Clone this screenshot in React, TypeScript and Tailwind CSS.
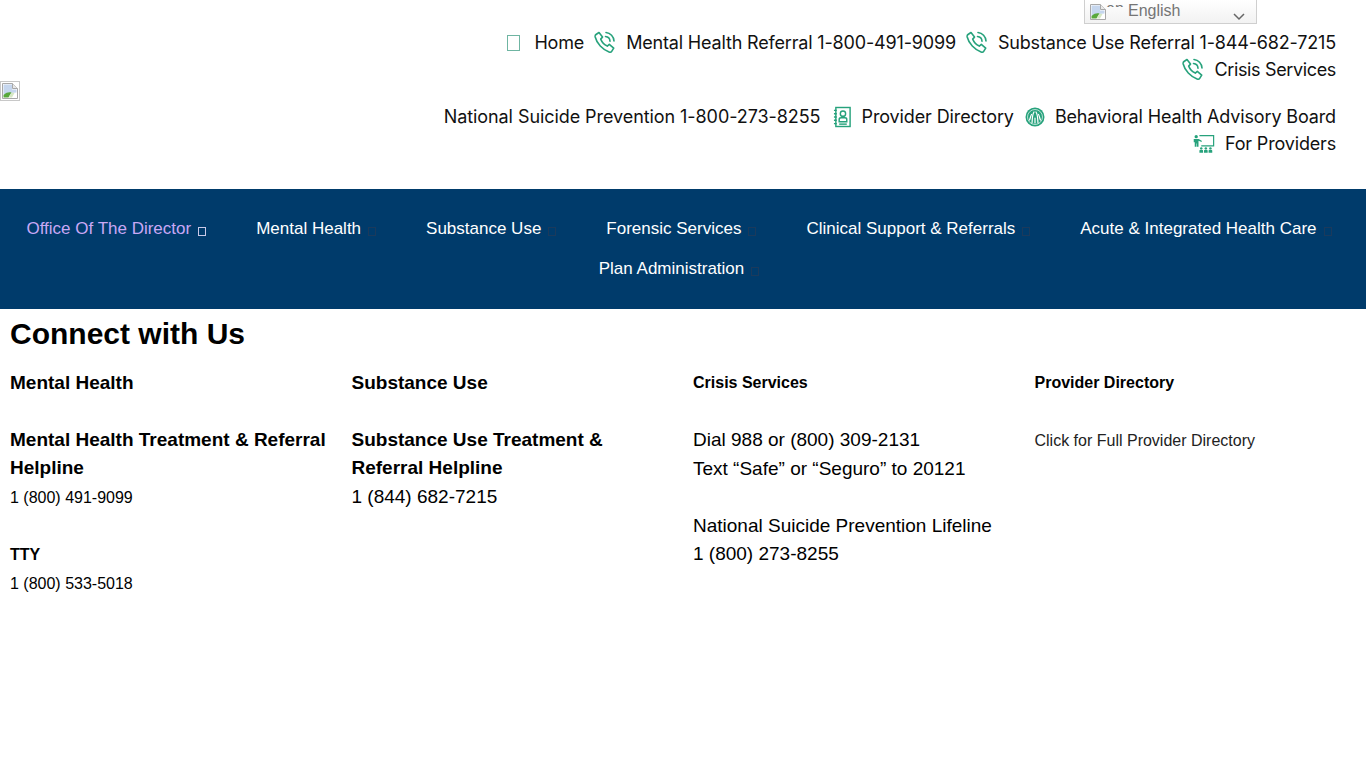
import { ReactNode } from "react";

const green = "#27a27c";

function PhoneIcon() {
  return (
    <svg width="22" height="23" viewBox="1 1 22 23" fill="none" stroke={green} strokeWidth="1.600" strokeLinecap="round" strokeLinejoin="round">
      <path d="M3 4.500 6 2.500l3.500 4.600-1.800 2a13 13 0 0 0 6.600 7l2-1.700 4.400 3.800-2 3.200c-.5.800-1.600 1-2.600.6C9.500 19.500 3.800 13.500 2.200 7c-.2-1 .1-2 .8-2.500z" />
      <path d="M12.500 6.500a5 5 0 0 1 4.500 4.700" />
      <path d="M13 2.500a9 9 0 0 1 8 8.500" />
    </svg>
  );
}

function BookIcon() {
  return (
    <svg width="19" height="22" viewBox="0 0 20 22" fill="none" stroke={green} strokeWidth="1.500">
      <rect x="3" y="1" width="15" height="20" />
      <path d="M1 4h3M1 7.500h3M1 11h3M1 14.500h3M1 18h3" />
      <circle cx="10.500" cy="7.500" r="2.800" />
      <path d="M6.500 16v-2.500c0-1 1-1.800 2-1.800h4c1 0 2 .8 2 1.800V16z" />
      <path d="M6.500 18.500h8" />
    </svg>
  );
}

function BoardIcon() {
  return (
    <svg width="20" height="20" viewBox="0 0 20 20">
      <circle cx="10" cy="10" r="9.500" fill={green} />
      <circle cx="10" cy="10" r="7.500" fill="none" stroke="#d8efe8" strokeWidth="0.800" />
      <g fill="none" stroke="#fff" strokeWidth="1.200" strokeLinecap="round">
        <path d="M7 16c.5-4 0-8 2-11M13 16c-.5-4 0-8-2-11" />
        <path d="M4.500 13c1-2 1-4 2-5.500M15.500 13c-1-2-1-4-2-5.500" />
        <path d="M10 16v-5" />
      </g>
    </svg>
  );
}

function ClassIcon() {
  return (
    <svg width="22" height="19" viewBox="0 0 24 20" fill={green}>
      <path d="M7 1.500h15.500v11H9" fill="none" stroke={green} strokeWidth="1.300" />
      <circle cx="3.500" cy="2.500" r="1.800" />
      <path d="M.8 5h5.400L9.500 7v1.300L6 7v6.500H4.200V10H3.700v3.500H1.900V8.500H.8z" />
      <circle cx="9" cy="15.300" r="1.300" />
      <circle cx="14" cy="15.300" r="1.300" />
      <circle cx="19" cy="15.300" r="1.300" />
      <path d="M7 20v-2c0-.8.800-1.200 2-1.200s2 .4 2 1.200v2zM12 20v-2c0-.8.800-1.200 2-1.200s2 .4 2 1.200v2zM17 20v-2c0-.8.800-1.200 2-1.200s2 .4 2 1.200v2z" />
    </svg>
  );
}

function BrokenImage() {
  return (
    <svg width="16" height="16" viewBox="0 0 16 16" className="shrink-0">
      <path d="M.5.5h10l5 5v10H.5z" fill="#fff" stroke="#a8a8a8" />
      <path d="M10.500.500v5h5" fill="#e8e8e8" stroke="#a8a8a8" />
      <path d="M1.500 1.500h8.500v5h4.500v3L9 10 1.500 12z" fill="#c5d6ee" />
      <path d="M1.500 14.500V12c3-3 6-3 8-2.500l-3 5z" fill="#58a83c" />
      <path d="M6.500 14.500l3-5 3 .5-2.500 4.500z" fill="#d6e8c6" />
    </svg>
  );
}

function TopLink({ icon, label, labelClass }: { icon: ReactNode; label: string; labelClass?: string }) {
  return (
    <span className="flex items-center">
      <span className="mr-[10px] flex justify-center">{icon}</span>
      <span className={labelClass}>{label}</span>
    </span>
  );
}

function Caret({ dim }: { dim?: boolean }) {
  return <span className={`ml-[7px] mt-[4px] inline-block h-[9px] w-[8px] border-x-[1.500px] border-y ${dim ? "border-[#1b3a5c]" : "border-[#c9c9e8]"}`} />;
}

const navItems = [
  "Office Of The Director",
  "Mental Health",
  "Substance Use",
  "Forensic Services",
  "Clinical Support & Referrals",
  "Acute & Integrated Health Care",
  "Plan Administration",
];

export default function App() {
  return (
    <div className="relative min-h-[768px] bg-white font-['Liberation_Sans',sans-serif] text-black">
      {/* language picker */}
      <div className="absolute left-[1084px] top-0 flex h-[24px] w-[173px] items-center border border-t-0 border-[#cfcfcf] bg-gradient-to-b from-white to-[#f2f2f2] pl-[5px] text-[16px] text-[#757575]">
        <BrokenImage />
        <span className="mb-[16px] h-[7px] w-[18px] overflow-hidden text-[16px] leading-[18px]">en</span>
        <span className="ml-[4px] mb-[1px]">English</span>
        <svg width="12" height="8" viewBox="0 0 12 8" className="absolute right-[11px] top-[13px]" fill="none" stroke="#666" strokeWidth="1.500">
          <path d="M1 1l5 5 5-5" />
        </svg>
      </div>

      {/* header */}
      <header className="flex h-[189px]">
        <div className="mt-[81px] h-[20px] w-[20px] shrink-0 border border-[#c8c8c8] p-[1px]">
          <BrokenImage />
        </div>
        <div className="flex flex-1 flex-col items-end pr-[30px] pt-[29px] font-['Inter',sans-serif] text-[18px] leading-[27px] tracking-[-0.17px] text-[#111]">
          <div className="flex">
            <span className="flex items-center">
              <span className="mr-[14px] h-[16px] w-[13px] border border-[#6fb5a2]" />
              <span>Home</span>
            </span>
            <span className="ml-[10px] flex">
              <TopLink icon={<PhoneIcon />} label="Mental Health Referral 1-800-491-9099" />
            </span>
            <span className="ml-[10px] flex">
              <TopLink icon={<PhoneIcon />} label="Substance Use Referral 1-844-682-7215" />
            </span>
          </div>
          <TopLink icon={<PhoneIcon />} label="Crisis Services" labelClass="tracking-[-0.35px]" />
          <div className="mt-[20px] flex">
            <span className="tracking-[-0.07px]">National Suicide Prevention 1-800-273-8255</span>
            <span className="ml-[12px]">
              <TopLink icon={<BookIcon />} label="Provider Directory" labelClass="tracking-[-0.12px]" />
            </span>
            <span className="ml-[11px]">
              <TopLink icon={<BoardIcon />} label="Behavioral Health Advisory Board" labelClass="tracking-[-0.14px]" />
            </span>
          </div>
          <TopLink icon={<ClassIcon />} label="For Providers" />
        </div>
      </header>

      {/* main nav */}
      <nav className="flex h-[120px] flex-wrap content-start justify-center bg-[#003b6b] pr-[8px] pt-[20px] text-[17px] text-white">
        {navItems.map((item, i) => (
          <a key={item} className={`flex h-[40px] items-center px-[25px] ${i === 0 ? "text-[#c9a8f5]" : ""}`}>
            {item}
            <Caret dim={i !== 0} />
          </a>
        ))}
      </nav>

      {/* connect */}
      <main className="pl-[10px] pt-[6px]">
        <h1 className="text-[30px] font-bold leading-[38px]">Connect with Us</h1>
        <div className="mt-[15.300px] grid grid-cols-[repeat(4,341.5px)] text-[19px] leading-[28.500px]">
          <div className="pr-[20px] pt-[0.700px]">
            <p className="font-bold">Mental Health</p>
            <p className="mt-[28.500px] font-bold">Mental Health Treatment &amp; Referral Helpline</p>
            <p><span className="text-[16px]">1 (800) 491-9099</span></p>
            <p className="mt-[27.500px] font-bold"><span className="text-[16px]">TTY</span></p>
            <p className="-mt-[0.500px]"><span className="text-[16px]">1 (800) 533-5018</span></p>
          </div>
          <div className="pr-[20px] pt-[0.700px]">
            <p className="font-bold">Substance Use</p>
            <p className="mt-[28.500px] font-bold">Substance Use Treatment &amp; Referral Helpline</p>
            <p>1 (844) 682-7215</p>
          </div>
          <div className="pr-[20px]">
            <p className="font-bold"><span className="text-[16px]">Crisis Services</span></p>
            <p className="mt-[28.500px]">Dial 988 or (800) 309-2131</p>
            <p>Text “Safe” or “Seguro” to 20121</p>
            <p className="mt-[28.500px]">National Suicide Prevention Lifeline</p>
            <p>1 (800) 273-8255</p>
          </div>
          <div>
            <p className="font-bold"><span className="text-[16px]">Provider Directory</span></p>
            <p className="mt-[28.500px]"><span className="text-[16px] text-[#222]">Click for Full Provider Directory</span></p>
          </div>
        </div>
      </main>
    </div>
  );
}
